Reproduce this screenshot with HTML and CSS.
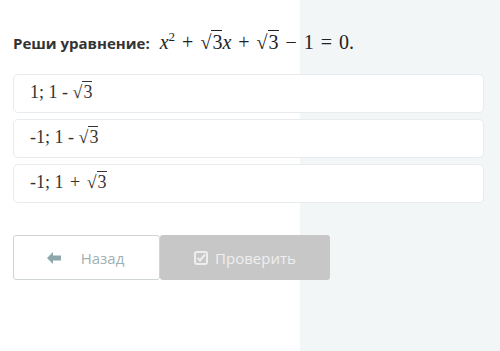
FILE: index.html
```html
<!DOCTYPE html>
<html lang="ru">

<head>
    <meta charset="UTF-8">
    <meta name="viewport" content="width=device-width, initial-scale=1.0">
    <title>Уравнение</title>
    <link rel="stylesheet" href="styles.css">
</head>

<body>
    <div class="task">
        <h2 class="question">
            <span class="label">Реши уравнение:</span>
            <span class="math"><i>x</i><sup>2</sup><span class="op">+</span><span class="sqrt">√<span class="rad">3</span></span><i>x</i><span class="op">+</span><span class="sqrt">√<span class="rad">3</span></span><span class="op">−</span>1<span class="op">=</span>0.</span>
        </h2>

        <div class="options">
            <div class="option">1; 1 - <span class="sqrt">√<span class="rad">3</span></span></div>
            <div class="option">-1; 1 - <span class="sqrt">√<span class="rad">3</span></span></div>
            <div class="option">-1; 1 <span class="op-sm">+</span> <span class="sqrt">√<span class="rad">3</span></span></div>
        </div>

        <div class="actions">
            <button class="btn btn-back">
                <svg class="icon" width="14" height="12" viewBox="0 0 14 12">
                    <path d="M0 6 L6 0 L6 3.5 L14 3.5 L14 8.5 L6 8.5 L6 12 Z" fill="#8ea7ab" />
                </svg>
                <span>Назад</span>
            </button>
            <button class="btn btn-check">
                <svg class="icon" width="14" height="14" viewBox="0 0 14 14">
                    <rect x="1" y="1" width="12" height="12" rx="2" fill="none" stroke="#eeeeee" stroke-width="2" />
                    <path d="M3.5 7 L6 9.5 L11 3.5" fill="none" stroke="#eeeeee" stroke-width="2" />
                </svg>
                <span>Проверить</span>
            </button>
        </div>
    </div>
</body>

</html>
```

FILE: styles.css
```css
body {
    margin: 0;
    padding: 0;
    font-family: "Open Sans", Arial, sans-serif;
    background: linear-gradient(to right, #ffffff 300px, #f2f6f7 300px);
    height: 351px;
}

.task {
    padding: 29px 16px 0 13px;
}

.question {
    margin: 0 0 20px 0;
    display: flex;
    align-items: baseline;
    gap: 10px;
}

.label {
    font-size: 15px;
    font-weight: 700;
    color: #333;
}

.math {
    font-family: "Liberation Serif", "Times New Roman", serif;
    font-size: 20px;
    font-weight: 400;
    color: #222;
}

.math sup {
    font-size: 13px;
    vertical-align: 8px;
}

.op {
    margin: 0 7px;
}

.op-sm {
    margin: 0 2px;
}

.sqrt {
    white-space: nowrap;
}

.rad {
    border-top: 1px solid #222;
    padding-left: 1px;
}

.options {
    display: flex;
    flex-direction: column;
    gap: 6px;
}

.option {
    height: 39px;
    box-sizing: border-box;
    padding: 7px 16px 0 16px;
    background-color: #fff;
    border: 1px solid #e8ecee;
    border-radius: 5px;
    font-family: "Liberation Serif", "Times New Roman", serif;
    font-size: 18px;
    color: #333;
}

.option .rad {
    border-top-color: #333;
}

.actions {
    display: flex;
    margin-top: 32px;
}

.btn {
    height: 45px;
    box-sizing: border-box;
    display: flex;
    align-items: center;
    justify-content: center;
    font-family: "Open Sans", Arial, sans-serif;
    font-size: 15px;
    border-radius: 3px;
}

.btn-back {
    width: 147px;
    background-color: #fff;
    border: 1px solid #cfd5d7;
    color: #9fb1b4;
    gap: 20px;
    padding-right: 8px;
}

.btn-check {
    width: 170px;
    background-color: #c7c7c7;
    border: none;
    color: #efefef;
    gap: 7px;
}
```
